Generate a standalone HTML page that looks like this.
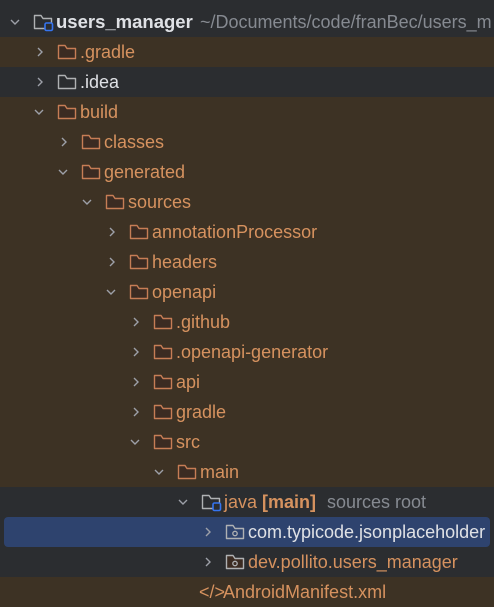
<!DOCTYPE html><html><head><style>
body{margin:0;width:494px;height:605px;background:#2b2d30;overflow:hidden;font-family:"Liberation Sans",sans-serif;font-size:18px;position:relative}
.r{position:absolute;left:0;width:494px;height:30px;white-space:nowrap}
.b{background:#3d3224}
.sel{background:#2e436e;left:4px;width:486px;border-radius:4px}
.t{position:absolute;top:5px;color:#d6925f}
.w{color:#dfe1e5}
.g{color:#868a91}
.ch{position:absolute;top:9px}
.ic{position:absolute;top:5px}
</style></head><body>
<div id="c"></div>
<script>
var items=[
[0,'o','users_manager','w bold'],
[1,'c','.gradle','',1],
[1,'c','.idea','w','gray'],
[1,'o','build','',1],
[2,'c','classes','',1],
[2,'o','generated','',1],
[3,'o','sources','',1],
[4,'c','annotationProcessor','',1],
[4,'c','headers','',1],
[4,'o','openapi','',1],
[5,'c','.github','',1],
[5,'c','.openapi-generator','',1],
[5,'c','api','',1],
[5,'c','gradle','',1],
[5,'o','src','',1],
[6,'o','main','',1],
[7,'o','java','java'],
[8,'c','com.typicode.jsonplaceholder','w','pkg'],
[8,'c','dev.pollito.users_manager','','pkg'],
[7,'n','AndroidManifest.xml','','xml']];
var h='';
items.forEach(function(it,i){
var L=it[0],top=7+30*i;
var cls='r';
if(i==17)cls+=' sel';else if(it[4]===1||i==1||i==19)cls+=' b';
var s='<div class="'+cls+'" style="top:'+top+'px">';
var off=(i==17)?-4:0;
var cx=10+24*L+off, fx=33+24*L+off, tx=56+24*L+off;
if(it[1]=='c')s+='<svg class="ch" style="left:'+cx+'px" width="12" height="12"><path d="M4 2l4 4-4 4" fill="none" stroke="#9da0a8" stroke-width="1.4"/></svg>';
if(it[1]=='o')s+='<svg class="ch" style="left:'+(cx-1)+'px" width="12" height="12"><path d="M2 4l4 4 4-4" fill="none" stroke="#9da0a8" stroke-width="1.4"/></svg>';
var kind=it[4], col='#c67d55', fill='#3b2b22';
if(kind=='gray'||i==0){col='#afb1b3';fill='#2b2d30';}
if(it[3]=='java'){col='#afb1b3';fill='none';}
if(kind=='xml'){s+='<span class="t" style="left:'+(fx-2)+'px;color:#d6925f">&lt;/&gt;</span>';}
else{
s+='<svg class="ic" style="left:'+fx+'px" width="21" height="20"><path d="M1.5 3.5v13h17v-10h-8.5l-2-3z" fill="'+(i==17?'#2e436e':(fill=='none'?'#2b2d30':fill))+'" stroke="'+(kind=='pkg'?'#afb1b3':col)+'" stroke-width="1.4" stroke-linejoin="round"/>';
if(kind=='pkg')s+='<circle cx="10" cy="11.5" r="2.2" fill="none" stroke="#afb1b3" stroke-width="1.3"/>';
if(i==0||it[3]=='java')s+='<rect x="12" y="11" width="7.5" height="7.5" rx="1.5" fill="#2b2d30" stroke="#3574f0" stroke-width="1.6"/>';
s+='</svg>';}
var tc=it[3];
if(i==0)s+='<span class="t w" style="left:'+tx+'px;font-weight:bold;font-size:18.5px;top:4px">users_manager</span><span class="t g" style="left:200px">~/Documents/code/franBec/users_m</span>';
else if(tc=='java')s+='<span class="t" style="left:'+tx+'px">java <b>[main]</b></span><span class="t g" style="left:327px">sources root</span>';
else s+='<span class="t '+tc+'" style="left:'+(kind=='xml'?tx-1:tx)+'px">'+it[2]+'</span>';
s+='</div>';h+=s;});
document.getElementById('c').innerHTML=h;
</script></body></html>
